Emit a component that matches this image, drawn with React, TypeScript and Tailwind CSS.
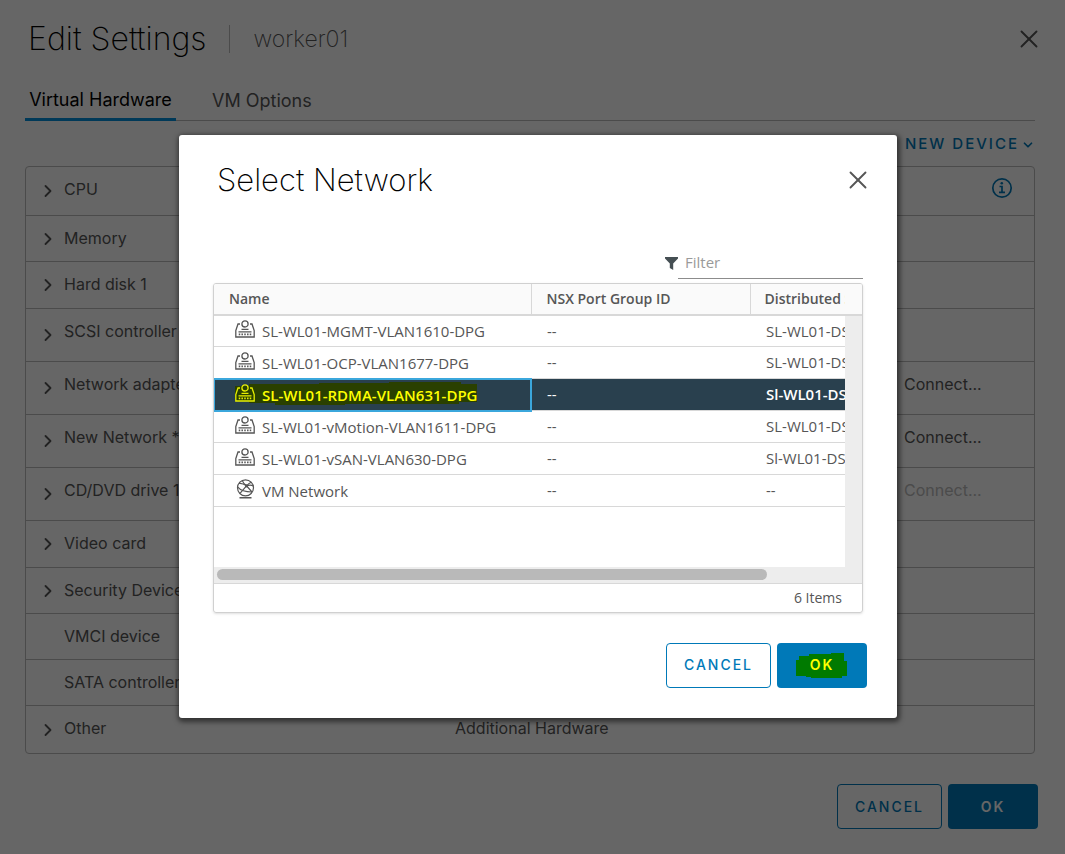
import React from "react";
import { ChevronDown, ChevronRight, X } from "lucide-react";

type Row = { label: string; height: string; expandable?: boolean; value?: string; action?: string; disabled?: boolean };

const hardware: Row[] = [
  { label: "CPU", height: "h-[49px]", expandable: true },
  { label: "Memory", height: "h-[46px]", expandable: true },
  { label: "Hard disk 1", height: "h-[47px]", expandable: true },
  { label: "SCSI controller 0", height: "h-[53px]", expandable: true },
  { label: "Network adapter 1", height: "h-[53px]", expandable: true, action: "Connect..." },
  { label: "New Network *", height: "h-[53px]", expandable: true, action: "Connect..." },
  { label: "CD/DVD drive 1", height: "h-[53px]", expandable: true, action: "Connect...", disabled: true },
  { label: "Video card", height: "h-[47px]", expandable: true },
  { label: "Security Devices", height: "h-[46px]", expandable: true },
  { label: "VMCI device", height: "h-[46px]" },
  { label: "SATA controller 0", height: "h-[46px]" },
  { label: "Other", height: "h-[47px]", expandable: true, value: "Additional Hardware" },
];

const networks = [
  { name: "SL-WL01-MGMT-VLAN1610-DPG", group: "--", dvs: "SL-WL01-DS01", port: true },
  { name: "SL-WL01-OCP-VLAN1677-DPG", group: "--", dvs: "SL-WL01-DS01", port: true },
  { name: "SL-WL01-RDMA-VLAN631-DPG", group: "--", dvs: "Sl-WL01-DS02", port: true, selected: true },
  { name: "SL-WL01-vMotion-VLAN1611-DPG", group: "--", dvs: "SL-WL01-DS01", port: true },
  { name: "SL-WL01-vSAN-VLAN630-DPG", group: "--", dvs: "Sl-WL01-DS02", port: true },
  { name: "VM Network", group: "--", dvs: "--", port: false },
];

function PortGroupIcon() {
  return (
    <svg viewBox="0 0 20 18" className="h-[18px] w-5 shrink-0" fill="none" stroke="currentColor" strokeWidth="1.3" aria-hidden="true">
      <circle cx="10" cy="3.9" r="3.1" />
      <path d="M5 4H3L.8 10.500v6.500h18.400v-6.500L17 4h-2" />
      <path d="M6.500 9.300h7M3.500 11.800h13" />
      <path d="M4.500 13.600v1.600M7.200 13.600v1.600M10 13.600v1.600M12.800 13.600v1.600M15.500 13.600v1.600" strokeWidth="1.500" />
    </svg>
  );
}

function NetworkIcon() {
  return (
    <svg viewBox="0 0 20 20" className="h-5 w-5 shrink-0" fill="none" stroke="currentColor" strokeWidth="1.2" aria-hidden="true">
      <circle cx="10.500" cy="8.800" r="8" />
      <path d="M4 4.400C6.500 4 9 5 11.500 6.800L17 13" />
      <path d="M16.200 3.200C14 4.200 12.800 5.400 11.500 6.800L5.200 14.200" />
      <path d="M7.300 1.600c.6 1.600 2 3.600 4.200 5.200M2.800 8.200c2.600 3.200 7.400 4.800 14.200 4.800M18.300 7c-1.600-.9-3.600-1.200-6.800-.2" />
      <circle cx="11.500" cy="6.800" r="1" fill="currentColor" />
      <path d="M4.500 18.700h12" strokeWidth="1.500" />
    </svg>
  );
}

function FunnelIcon() {
  return (
    <svg viewBox="0 0 13 13" className="h-[13px] w-[13px] shrink-0 text-[#454f53]" fill="currentColor" aria-hidden="true">
      <path d="M0 0h13v1.600L8.200 6.600V13L4.800 11V6.600L0 1.600z" />
    </svg>
  );
}

function InfoIcon() {
  return (
    <svg viewBox="0 0 22 22" className="mr-[21px] ml-auto h-[22px] w-[22px] text-[#0079b8]" fill="none" stroke="currentColor" strokeWidth="1.700" aria-hidden="true">
      <circle cx="11" cy="11" r="9.200" />
      <path d="M8.500 9.500H11V15.200M8 15.400h6" />
      <circle cx="10.800" cy="6.300" r="1.300" fill="currentColor" stroke="none" />
    </svg>
  );
}

function Actions({ marked = false }: { marked?: boolean }) {
  return (
    <div className="flex justify-end gap-1.5 text-sm font-medium tracking-[2px]">
      <button className="h-[45px] w-[105px] rounded border border-[#0079b8] text-[#0079b8]">CANCEL</button>
      <button className="relative flex h-[45px] w-[90px] items-center justify-center rounded bg-[#0079b8] font-semibold text-white">
        {marked && (
          <svg viewBox="0 0 51 25" className="absolute top-2.5 left-[19px] h-[25px] w-[51px]" fill="#007a00" aria-hidden="true">
            <path d="M0 7h3V3h10V1h22V0h13v8h3v15h-5v2H15v-1h-5v-1H0z" />
          </svg>
        )}
        <span className={marked ? "relative text-[#ffff00]" : ""}>OK</span>
      </button>
    </div>
  );
}

export default function App() {
  return (
    <div className="relative min-h-screen bg-white font-['Inter','Liberation_Sans',sans-serif] text-[#565656]">
      <main className="px-[25px] pt-[18px] pb-[25px]">
        <header className="flex h-[42px] items-center">
          <h1 className="pl-[3px] text-[32px] leading-10 font-extralight text-black">Edit Settings</h1>
          <span className="ml-[22px] h-7 border-l border-[#bbb]" />
          <span className="pl-6 text-[23px] leading-8 font-extralight">worker01</span>
          <button aria-label="Close" className="ml-auto -mr-1">
            <X className="h-[30px] w-[30px]" strokeWidth={1.5} />
          </button>
        </header>

        <nav className="mt-5 mr-[5px] flex h-[41px] gap-9 border-b border-[#bbb] text-[18px] leading-10">
          <button className="h-[41px] w-[151px] border-b-[3px] border-[#0090dc] text-black">Virtual Hardware</button>
          <button className="h-[41px]">VM Options</button>
        </nav>

        <div className="mr-[5px] flex h-[45px] items-center justify-end text-[15px] text-[#0079b8]">
          <button className="flex items-center gap-0.5 pt-0.5 font-medium tracking-[2px]">
            ADD NEW DEVICE <ChevronDown className="h-3.5 w-3.5" strokeWidth={3} />
          </button>
        </div>

        <section className="mr-[5px] rounded-sm border border-[#bbb] text-base">
          {hardware.map((row, i) => (
            <div
              key={row.label}
              className={`flex ${row.height} ${i === hardware.length - 1 ? "" : "border-b border-[#bbb]"}`}
            >
              <div className="flex w-[38px] shrink-0 items-center pl-3">
                {row.expandable && <ChevronRight className="h-5 w-5" strokeWidth={2.2} />}
              </div>
              <div className="w-[391px] shrink-0 pt-2.5 leading-6">{row.label}</div>
              <div className="w-[425px] shrink-0 pt-2.5 leading-6">{row.value}</div>
              <div className={`flex-1 pt-2.5 leading-6 ${row.disabled ? "text-[#bbb]" : ""}`}>
                <div className="flex items-center">
                  {row.action && (
                    <label className="flex items-center gap-2">
                      <input type="checkbox" disabled={row.disabled} className="h-4 w-4" />
                      {row.action}
                    </label>
                  )}
                  {i === 0 && <InfoIcon />}
                </div>
              </div>
            </div>
          ))}
        </section>

        <div className="mt-[30px] mr-0.5">
          <Actions />
        </div>
      </main>

      <div className="absolute inset-0 flex items-center justify-center bg-black/60 pb-0.5 pl-[11px]">
        <div role="dialog" aria-label="Select Network" className="w-[718px] rounded-[3px] bg-white px-[34px] pt-[25px] pb-[30px] shadow-[1px_2px_5px_2px_rgba(0,0,0,0.5)]">
          <div className="flex h-10 items-center justify-between">
            <h2 className="pl-1 text-[31px] leading-10 font-extralight text-black">Select Network</h2>
            <button aria-label="Close" className="-mr-2.5">
              <X className="h-[30px] w-[30px]" strokeWidth={1.5} />
            </button>
          </div>

          <div className="font-['Open_Sans','Liberation_Sans',sans-serif] text-[15px]">
            <label className="mt-12 flex items-center justify-end">
              <FunnelIcon />
              <span className="sr-only">Filter</span>
              <input placeholder="Filter" className="h-[31px] w-[185px] border-b border-[#8c8c8c] pb-0.5 pl-[7px] outline-none placeholder:text-[#9a9a9a]" />
            </label>

            <div className="mt-1 overflow-hidden rounded-[3px] border border-[#d0d0d0] shadow-sm">
              <div className="flex h-[283px]">
                <div className="min-w-0 flex-1 overflow-hidden">
                  <table className="w-[750px] table-fixed border-collapse text-left">
                    <colgroup>
                      <col className="w-[317px]" />
                      <col className="w-[219px]" />
                      <col />
                    </colgroup>
                    <thead>
                      <tr className="h-[31px] border-b-2 border-[#d8d8d8] bg-[#fafafa] text-sm">
                        <th className="border-r border-[#d8d8d8] p-0 pl-[15px] font-semibold">Name</th>
                        <th className="border-r border-[#d8d8d8] p-0 pl-[15px] font-semibold">NSX Port Group ID</th>
                        <th className="p-0 pl-3.5 font-semibold whitespace-nowrap">Distributed Switch</th>
                      </tr>
                    </thead>
                    <tbody>
                      {networks.map((n) => (
                        <tr
                          key={n.name}
                          className={`h-8 border-b border-[#d8d8d8] ${n.selected ? "bg-[#29404e] text-white" : ""}`}
                        >
                          <td className={`p-0 pl-[21px] ${n.selected ? "outline-2 -outline-offset-1 outline-[#3ba7dc]" : ""}`}>
                            <span className="relative flex items-center">
                              {n.selected && (
                                <svg viewBox="0 0 242 23" className="absolute -top-0.5 left-0 h-[23px] w-[242px]" fill="#2a4000" aria-hidden="true">
                                  <path d="M0 4h14V2h70V1h70V0h72v2h16v18h-18v2H110v1H40v-2H14v-2H0z" />
                                </svg>
                              )}
                              <span className={`relative flex w-[27px] pb-[3px] ${n.selected ? "text-[#e8f000]" : ""}`}>
                                {n.port ? <PortGroupIcon /> : <NetworkIcon />}
                              </span>
                              <span className={`relative leading-5 ${n.selected ? "font-semibold text-[#ffff00]" : ""}`}>{n.name}</span>
                            </span>
                          </td>
                          <td className="p-0 pl-4">{n.group}</td>
                          <td className={`p-0 pl-4 whitespace-nowrap ${n.selected ? "font-semibold" : ""}`}>{n.dvs}</td>
                        </tr>
                      ))}
                    </tbody>
                  </table>
                </div>
                <div className="flex w-[17px] flex-col bg-[#ededed]">
                  <div className="h-8 border-b-2 border-[#d8d8d8] bg-[#fafafa]" />
                </div>
              </div>
              <div className="flex h-[17px] items-center border-b border-[#d8d8d8] bg-[#ededed] px-[3px]">
                <div className="h-[11px] w-[550px] rounded-full bg-[#b9b9b9]" />
              </div>
              <div className="flex h-7 items-center justify-end pr-5 text-sm">6 Items</div>
            </div>
          </div>

          <div className="mt-[30px] -mr-1">
            <Actions marked />
          </div>
        </div>
      </div>
    </div>
  );
}
